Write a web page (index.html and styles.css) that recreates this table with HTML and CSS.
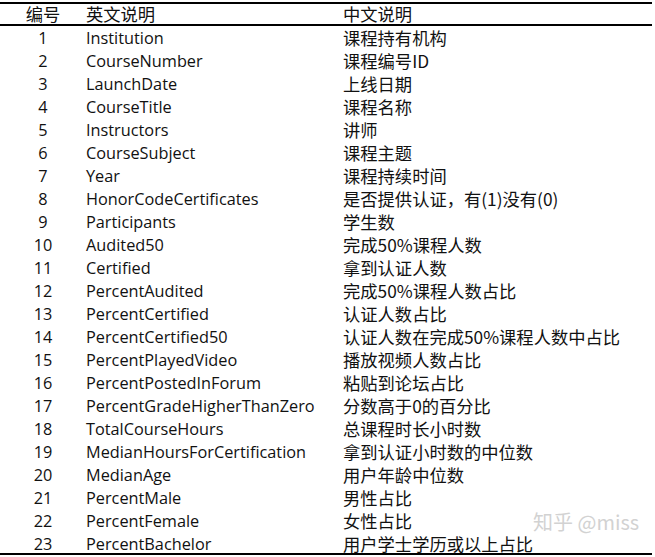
FILE: index.html
```html
<!DOCTYPE html>
<html lang="zh">
<head>
<meta charset="utf-8">
<link rel="stylesheet" href="styles.css">
</head>
<body>
<div class="sheet">
  <div class="table">
    <div class="row head"><span class="num">编号</span><span class="en">英文说明</span><span class="zh">中文说明</span></div>
    <div class="body">
      <div class="row"><span class="num">1</span><span class="en">Institution</span><span class="zh">课程持有机构</span></div>
      <div class="row"><span class="num">2</span><span class="en">CourseNumber</span><span class="zh">课程编号ID</span></div>
      <div class="row"><span class="num">3</span><span class="en">LaunchDate</span><span class="zh">上线日期</span></div>
      <div class="row"><span class="num">4</span><span class="en">CourseTitle</span><span class="zh">课程名称</span></div>
      <div class="row"><span class="num">5</span><span class="en">Instructors</span><span class="zh">讲师</span></div>
      <div class="row"><span class="num">6</span><span class="en">CourseSubject</span><span class="zh">课程主题</span></div>
      <div class="row"><span class="num">7</span><span class="en">Year</span><span class="zh">课程持续时间</span></div>
      <div class="row"><span class="num">8</span><span class="en">HonorCodeCertificates</span><span class="zh">是否提供认证，有(1)没有(0)</span></div>
      <div class="row"><span class="num">9</span><span class="en">Participants</span><span class="zh">学生数</span></div>
      <div class="row"><span class="num">10</span><span class="en">Audited50</span><span class="zh">完成50%课程人数</span></div>
      <div class="row"><span class="num">11</span><span class="en">Certified</span><span class="zh">拿到认证人数</span></div>
      <div class="row"><span class="num">12</span><span class="en">PercentAudited</span><span class="zh">完成50%课程人数占比</span></div>
      <div class="row"><span class="num">13</span><span class="en">PercentCertified</span><span class="zh">认证人数占比</span></div>
      <div class="row"><span class="num">14</span><span class="en">PercentCertified50</span><span class="zh">认证人数在完成50%课程人数中占比</span></div>
      <div class="row"><span class="num">15</span><span class="en">PercentPlayedVideo</span><span class="zh">播放视频人数占比</span></div>
      <div class="row"><span class="num">16</span><span class="en">PercentPostedInForum</span><span class="zh">粘贴到论坛占比</span></div>
      <div class="row"><span class="num">17</span><span class="en">PercentGradeHigherThanZero</span><span class="zh">分数高于0的百分比</span></div>
      <div class="row"><span class="num">18</span><span class="en">TotalCourseHours</span><span class="zh">总课程时长小时数</span></div>
      <div class="row"><span class="num">19</span><span class="en">MedianHoursForCertification</span><span class="zh">拿到认证小时数的中位数</span></div>
      <div class="row"><span class="num">20</span><span class="en">MedianAge</span><span class="zh">用户年龄中位数</span></div>
      <div class="row"><span class="num">21</span><span class="en">PercentMale</span><span class="zh">男性占比</span></div>
      <div class="row"><span class="num">22</span><span class="en">PercentFemale</span><span class="zh">女性占比</span></div>
      <div class="row last"><span class="num">23</span><span class="en">PercentBachelor</span><span class="zh">用户学士学历或以上占比</span></div>
    </div>
  </div>
  <div class="watermark">知乎 @miss</div>
</div>
</body>
</html>
```
FILE: styles.css
```css
html, body {
  margin: 0;
  padding: 0;
  background: #fff;
}
.sheet {
  position: relative;
  width: 655px;
  height: 557px;
  overflow: hidden;
  padding-top: 2px;
  box-sizing: border-box;
}
.table {
  width: 652px;
  border-top: 2px solid #000;
  font-family: "Open Sans", "Noto Sans CJK SC", sans-serif;
  font-size: 16.3px;
  color: #111;
}
.row {
  display: grid;
  grid-template-columns: 86px 257px 1fr;
  height: 23px;
  line-height: 23px;
  white-space: nowrap;
}
.head {
  height: 20px;
  line-height: 20px;
  border-bottom: 2px solid #000;
}
.body {
  padding-top: 1px;
  border-bottom: 2px solid #000;
}
.row.last {
  height: 20px;
}
.num {
  text-align: center;
}
.zh {
  font-family: "Noto Sans CJK SC", sans-serif;
  font-size: 17.3px;
  line-height: 21px;
}
.head .num,
.head .en,
.head .zh {
  font-family: "Noto Sans CJK SC", sans-serif;
  font-size: 17.3px;
  line-height: 20px;
}
.watermark {
  position: absolute;
  left: 533px;
  top: 507px;
  font-family: "Noto Sans CJK SC", sans-serif;
  font-size: 20px;
  color: #d2d2d2;
}
```
